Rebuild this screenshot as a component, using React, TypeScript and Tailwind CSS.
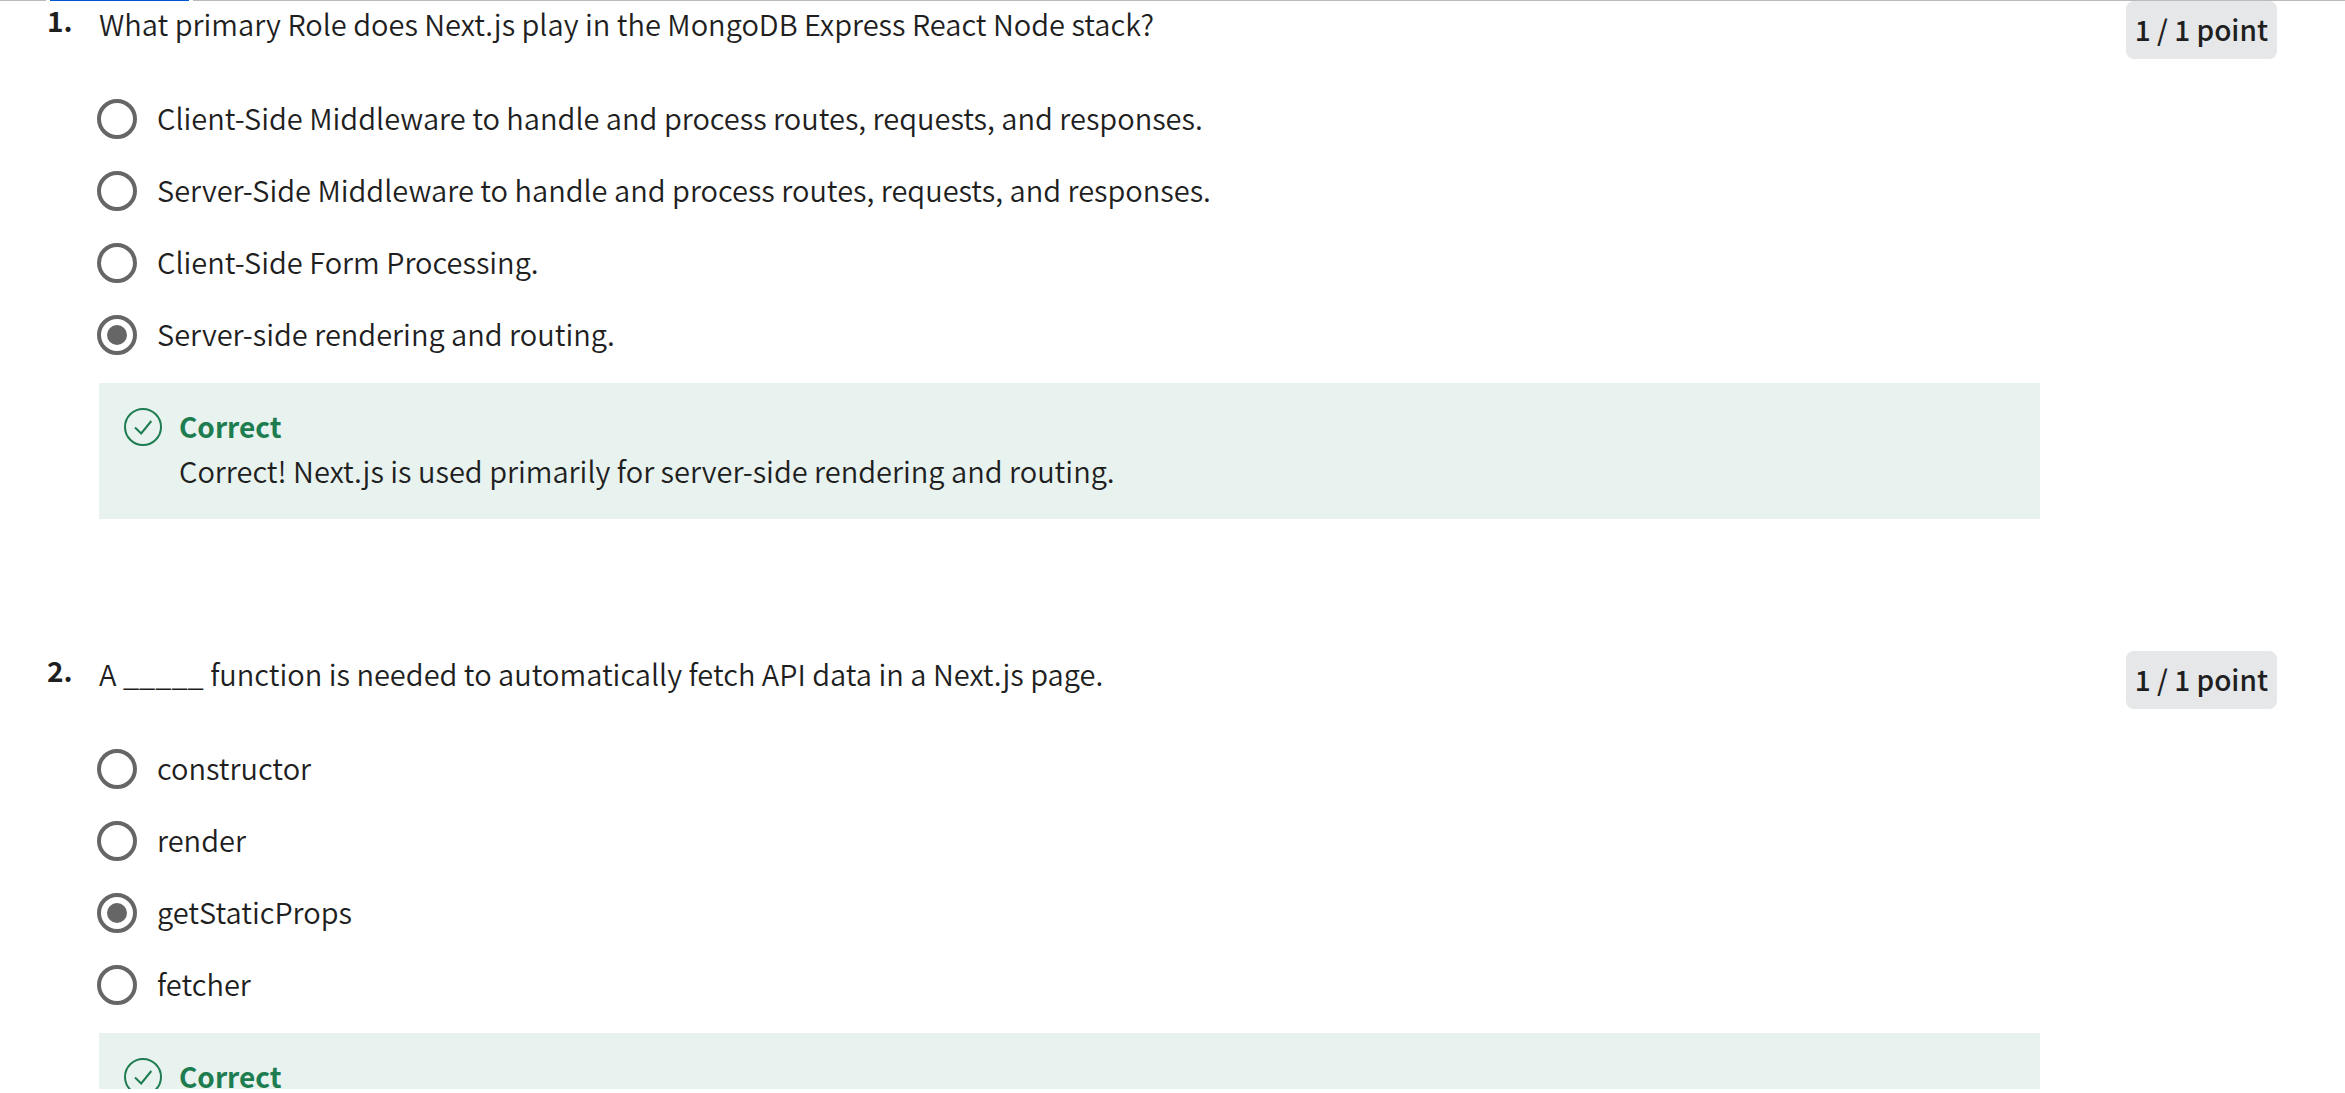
import { useState } from "react";

type Question = {
  id: number;
  prompt: string;
  options: string[];
  answer: number;
  explanation?: string;
};

const questions: Question[] = [
  {
    id: 1,
    prompt: "What primary Role does Next.js play in the MongoDB Express React Node stack?",
    options: [
      "Client-Side Middleware to handle and process routes, requests, and responses.",
      "Server-Side Middleware to handle and process routes, requests, and responses.",
      "Client-Side Form Processing.",
      "Server-side rendering and routing.",
    ],
    answer: 3,
    explanation: "Correct! Next.js is used primarily for server-side rendering and routing.",
  },
  {
    id: 2,
    prompt: "A _____ function is needed to automatically fetch API data in a Next.js page.",
    options: ["constructor", "render", "getStaticProps", "fetcher"],
    answer: 2,
  },
];

function CheckCircle() {
  return (
    <svg viewBox="0 0 38 38" className="mt-1 size-[38px] shrink-0" fill="none" stroke="#1d7c50" strokeWidth="2" aria-hidden="true">
      <circle cx="19" cy="19" r="18" />
      <path d="M11 19.5l6.2 6L27.3 13" />
    </svg>
  );
}

function QuestionItem({ question }: { question: Question }) {
  const [selected, setSelected] = useState(question.answer);
  return (
    <li className="flex items-start pr-[68px] pl-[47px]">
      <span className="w-[52px] shrink-0 text-[28px] leading-[38px] font-bold">{question.id}.</span>
      <fieldset className="min-w-0 flex-1">
        <legend className="text-[29px] leading-[44px] font-[350]">{question.prompt}</legend>
        <div className="flex flex-col gap-8 pt-[54px]">
          {question.options.map((option, index) => (
            <label key={option} className="-ml-[2px] flex items-center gap-5 text-[29px] leading-9 font-[350]">
              <input
                type="radio"
                name={`question-${question.id}`}
                checked={selected === index}
                onChange={() => setSelected(index)}
                className="grid size-10 shrink-0 appearance-none place-items-center rounded-full border-4 border-[#666666] before:size-5 before:rounded-full before:content-[''] checked:before:bg-[#666666]"
              />
              <span className="pb-1">{option}</span>
            </label>
          ))}
        </div>
        <div className="mt-7 flex min-h-[136px] items-start gap-[17px] bg-[#e8f2ee] pt-[21px] pb-[27px] pl-[25px]">
          <CheckCircle />
          <div className="text-[29px] leading-[44px] font-[350]">
            <p className="text-[28px] font-bold text-[#1d7c50]">Correct</p>
            {question.explanation && <p>{question.explanation}</p>}
          </div>
        </div>
      </fieldset>
      <span className="ml-[86px] shrink-0 rounded-lg bg-[#e5e7e8] px-[9px] pb-[2px] text-[28px] leading-[56px] font-medium">1 / 1 point</span>
    </li>
  );
}

export default function App() {
  return (
    <main className="h-screen bg-white pb-1 font-['Noto_Sans_CJK_SC',sans-serif] text-[#1f1f1f]">
      <div className="h-full overflow-hidden">
        <div className="flex h-px gap-1">
          <div className="w-[46px] bg-[#bbbbbb]" />
          <div className="w-[139px] bg-[#0056d2]" />
          <div className="flex-1 bg-[#bbbbbb]" />
        </div>
        <ol className="flex flex-col gap-[132px]">
          {questions.map((question) => (
            <QuestionItem key={question.id} question={question} />
          ))}
        </ol>
      </div>
    </main>
  );
}
